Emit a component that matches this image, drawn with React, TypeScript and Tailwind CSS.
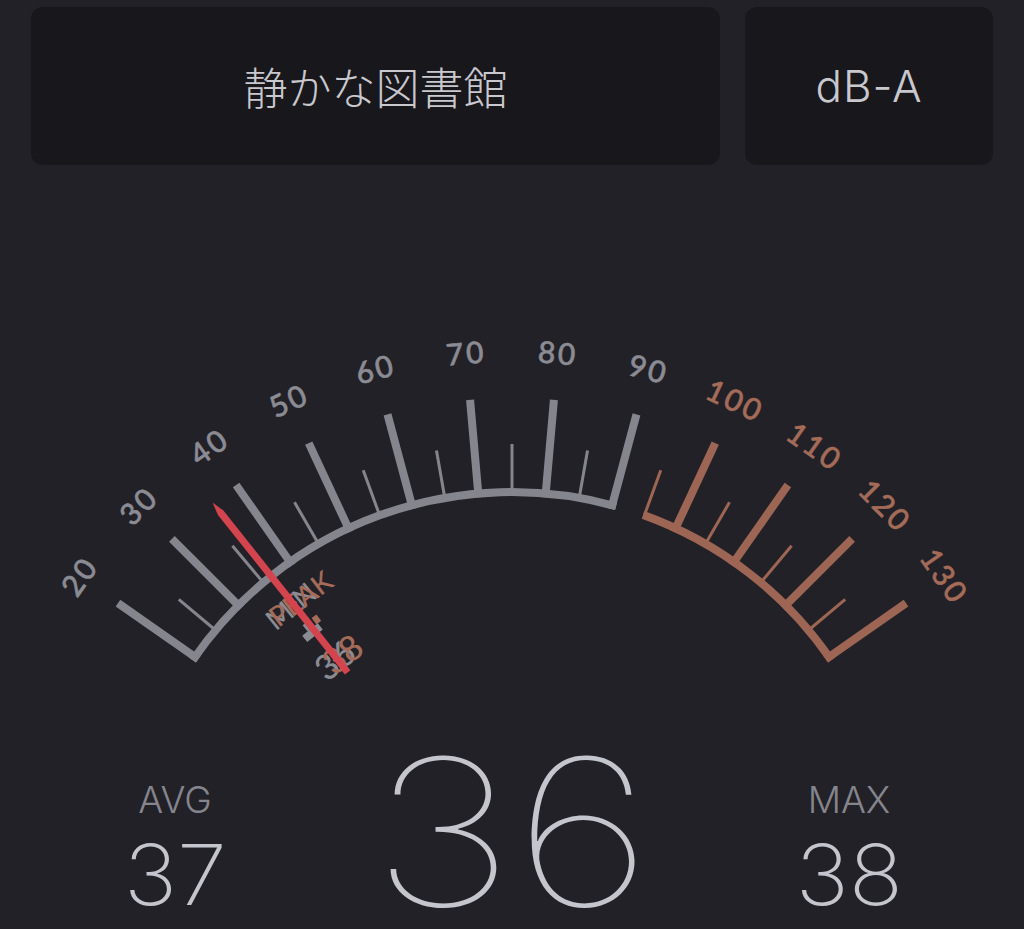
import React from "react";

const CX = 512;
const CY = 879;
const R = 387;

function pt(v: number, r: number): [number, number] {
  const a = ((v - 75) * Math.PI) / 180;
  return [CX + r * Math.sin(a), CY - r * Math.cos(a)];
}

function arcPath(v1: number, v2: number, r: number) {
  const [x1, y1] = pt(v1, r);
  const [x2, y2] = pt(v2, r);
  return `M ${x1} ${y1} A ${r} ${r} 0 0 1 ${x2} ${y2}`;
}

const GRAY = "#85858d";
const GRAY_TEXT = "#8b8b93";
const COPPER = "#9d6553";
const COPPER_TEXT = "#a46b59";
const NEEDLE = "#d4444f";

function Gauge() {
  const ticks: { v: number; color: string }[] = [];
  for (let v = 20; v <= 130; v += 5) {
    ticks.push({ v, color: v <= 90 ? GRAY : COPPER });
  }
  const labels = [20, 30, 40, 50, 60, 70, 80, 90, 100, 110, 120, 130];
  const fontStack = "Lato, 'Noto Sans', sans-serif";

  const minV = 36;
  const peakV = 38;
  const needleV = 36;

  return (
    <svg width={1024} height={540} viewBox="0 165 1024 540" className="block">
      <path d={arcPath(20 - 0.6, 90 + 0.6, R)} stroke={GRAY} strokeWidth={8} fill="none" />
      <path d={arcPath(95 - 0.2, 130 + 0.6, R)} stroke={COPPER} strokeWidth={8} fill="none" />
      {ticks.map(({ v, color }) => {
        const major = v % 10 === 0;
        const [x1, y1] = pt(v, major ? R - 4 : R);
        const [x2, y2] = pt(v, major ? 481 : 435);
        return (
          <line
            key={v}
            x1={x1}
            y1={y1}
            x2={x2}
            y2={y2}
            stroke={color}
            strokeWidth={major ? 8 : 3}
          />
        );
      })}
      {labels.map((v) => {
        const [x, y] = pt(v, 529);
        return (
          <text
            key={v}
            x={x}
            y={y}
            transform={`rotate(${v - 75} ${x} ${y})`}
            textAnchor="middle"
            dominantBaseline="central"
            fill={v <= 90 ? GRAY_TEXT : COPPER_TEXT}
            fontSize={30}
            letterSpacing={2.5}
            stroke={v <= 90 ? GRAY_TEXT : COPPER_TEXT}
            strokeWidth={0.6}
            style={{ fontFamily: fontStack, fontWeight: 500 }}
          >
            {v}
          </text>
        );
      })}

      {/* MIN marker */}
      <g transform={`rotate(${minV - 75} ${CX} ${CY})`}>
        <text
          x={CX}
          y={CY - 352}
          textAnchor="middle"
          dominantBaseline="central"
          fill={GRAY_TEXT}
          fontSize={28}
          style={{ fontFamily: fontStack, fontWeight: 500 }}
        >
          MIN
        </text>
        <rect x={CX - 10} y={CY - 321} width={20} height={8} fill={GRAY_TEXT} />
        <rect x={CX - 3} y={CY - 329} width={6} height={8} fill={GRAY_TEXT} />
        <text
          x={CX}
          y={CY - 283}
          textAnchor="middle"
          dominantBaseline="central"
          fill={GRAY_TEXT}
          fontSize={35}
          style={{ fontFamily: fontStack, fontWeight: 500 }}
        >
          36
        </text>
      </g>
      {/* PEAK marker */}
      <g transform={`rotate(${peakV - 75} ${CX} ${CY})`}>
        <text
          x={CX}
          y={CY - 352}
          textAnchor="middle"
          dominantBaseline="central"
          fill={COPPER_TEXT}
          fontSize={28}
          style={{ fontFamily: fontStack, fontWeight: 500 }}
        >
          PEAK
        </text>
        <rect x={CX - 3} y={CY - 329} width={6} height={8} fill={COPPER_TEXT} />
        <text
          x={CX}
          y={CY - 283}
          textAnchor="middle"
          dominantBaseline="central"
          fill={COPPER_TEXT}
          fontSize={35}
          style={{ fontFamily: fontStack, fontWeight: 500 }}
        >
          38
        </text>
      </g>

      {/* Needle */}
      <g transform={`rotate(${needleV - 75 + 0.5} ${CX} ${CY})`}>
        <polygon
          points={`${CX - 3.5},${CY - 264} ${CX + 3.5},${CY - 264} ${CX + 3.5},${CY - 468} ${CX},${CY - 481} ${CX - 3.5},${CY - 468}`}
          fill={NEEDLE}
        />
      </g>
    </svg>
  );
}

export default function App() {
  return (
    <div className="w-[1024px] h-[929px] bg-[#222127]">
      <div className="flex gap-[25px] pl-[31px] pr-[31px] pt-[7px]">
        <div className="w-[689px] h-[158px] rounded-[12px] bg-[#18171c] flex items-center justify-center">
          <span
            className="text-[44px] leading-none text-[#c8c8ce]"
            style={{ fontFamily: "'Noto Sans CJK JP', sans-serif", fontWeight: 300 }}
          >
            静かな図書館
          </span>
        </div>
        <div className="w-[248px] h-[158px] rounded-[12px] bg-[#18171c] flex items-center justify-center">
          <span
            className="text-[44px] leading-none tracking-[1px] text-[#c8c8ce]"
            style={{ fontFamily: "Inter, 'Noto Sans', sans-serif", fontWeight: 300 }}
          >
            dB-A
          </span>
        </div>
      </div>

      <Gauge />

      <div className="flex h-[224px]" style={{ fontFamily: "Inter, 'Noto Sans', sans-serif" }}>
        <div className="w-[350px] flex flex-col items-center pt-[76px]">
          <span className="text-[37px] leading-none text-[#85858e] font-light">AVG</span>
          <span className="mt-[15px] text-[84px] leading-none text-[#c5c5cd] font-extralight scale-x-[1.07]">
            37
          </span>
        </div>
        <div className="w-[324px] flex justify-center pt-[45px]">
          <span className="text-[204px] leading-[0.8] text-[#c5c5cd] font-thin scale-x-[1.2]">36</span>
        </div>
        <div className="w-[350px] flex flex-col items-center pt-[76px]">
          <span className="text-[37px] leading-none text-[#85858e] font-light">MAX</span>
          <span className="mt-[15px] text-[84px] leading-none text-[#c5c5cd] font-extralight scale-x-[1.07]">
            38
          </span>
        </div>
      </div>
    </div>
  );
}
